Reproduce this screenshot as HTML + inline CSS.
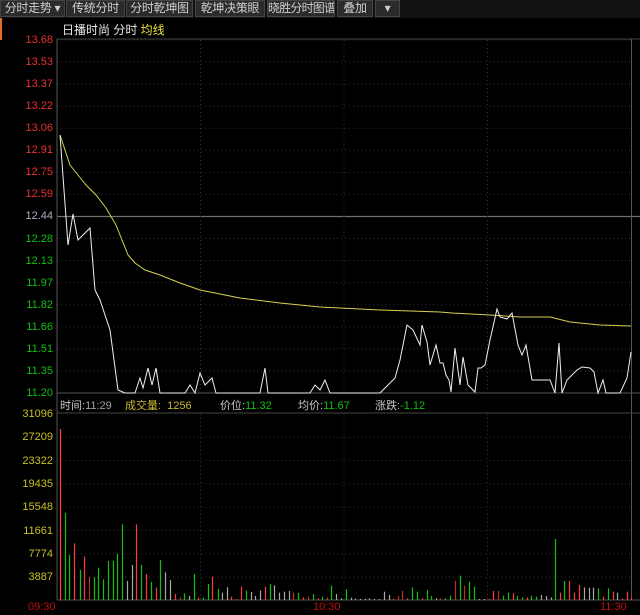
<!DOCTYPE html>
<html><head><meta charset="utf-8"><style>
*{margin:0;padding:0;box-sizing:border-box}
body{width:640px;height:615px;background:#000;overflow:hidden;position:relative;font-family:"Liberation Sans","Noto Sans CJK SC",sans-serif;font-size:12px}
.tb{position:absolute;top:0;left:0;width:640px;height:18px;background:#111}
.b{position:absolute;top:0;height:17px;background:#2b2b2b;border:1px solid #444;color:#cfcfcf;font-size:12px;line-height:15px;text-align:center;white-space:nowrap;overflow:hidden;letter-spacing:-0.3px}
.t{position:absolute;white-space:nowrap;font-size:11px;line-height:12px}
</style></head><body>
<div class="tb">
<div class="b" style="left:0;width:65px">分时走势 ▾</div>
<div class="b" style="left:66px;width:59px">传统分时</div>
<div class="b" style="left:126px;width:67px">分时乾坤图</div>
<div class="b" style="left:195px;width:70px">乾坤决策眼</div>
<div class="b" style="left:267px;width:68px;letter-spacing:-0.8px">晓胜分时图谱</div>
<div class="b" style="left:337px;width:36px">叠加</div>
<div class="b" style="left:375px;width:25px">▾</div>
</div>
<div style="position:absolute;left:0;top:18px;width:2px;height:22px;background:#e07020"></div>
<div class="t" style="left:62px;top:24px;font-size:12px;color:#e8e8e8">日播时尚 分时 <span style="color:#e8e040">均线</span></div>
<svg id="s" width="640" height="615" style="position:absolute;left:0;top:0"></svg>
<div id="labels"></div>
<div class="t" style="left:60px;top:400px;color:#c8c8c8">时间:<span style="color:#a0a0a0">11:29</span></div>
<div class="t" style="left:125px;top:400px;color:#c8b830">成交量: &nbsp;1256</div>
<div class="t" style="left:220px;top:400px;color:#c8c8c8">价位:<span style="color:#10c010">11.32</span></div>
<div class="t" style="left:298px;top:400px;color:#c8c8c8">均价:<span style="color:#10c010">11.67</span></div>
<div class="t" style="left:375px;top:400px;color:#c8c8c8">涨跌:<span style="color:#10c010">-1.12</span></div>
<div class="t" style="left:28px;top:601px;color:#c01010">09:30</div>
<div class="t" style="left:313px;top:601px;color:#c01010">10:30</div>
<div class="t" style="left:600px;top:601px;color:#c01010">11:30</div>
<script>
var s=document.getElementById('s'),h='';
var pl=["13.68","13.53","13.37","13.22","13.06","12.91","12.75","12.59","12.44","12.28","12.13","11.97","11.82","11.66","11.51","11.35","11.20"];
var lab='';
for(var i=0;i<17;i++){var y=40+i*22.06;
 if(i==8)h+='<line x1="57" y1="'+y+'" x2="640" y2="'+y+'" stroke="#707070" stroke-width="1.2"/>';
 else if(i==16)h+='<line x1="57" y1="'+y+'" x2="640" y2="'+y+'" stroke="#555"/>';
 else h+='<line x1="57" y1="'+y+'" x2="631" y2="'+y+'" stroke="#333" stroke-dasharray="1,3"/>';
 var c=i<8?'#e83030':(i==8?'#a8b4c8':'#10c010');
 lab+='<div class="t" style="right:587px;top:'+(y-6)+'px;color:'+c+'">'+pl[i]+'</div>';}
h+='<line x1="57" y1="39" x2="640" y2="39" stroke="#444"/>';
for(var k=1;k<4;k++){var x=57+k*143.5;h+='<line x1="'+x+'" y1="40" x2="'+x+'" y2="393" stroke="#333" stroke-dasharray="1,3"/><line x1="'+x+'" y1="414" x2="'+x+'" y2="600" stroke="#333" stroke-dasharray="1,3"/>';}
h+='<line x1="57" y1="39" x2="57" y2="600" stroke="#555"/><line x1="631.5" y1="39" x2="631.5" y2="600" stroke="#555"/>';
h+='<line x1="57" y1="413" x2="640" y2="413" stroke="#444"/><line x1="57" y1="600" x2="640" y2="600" stroke="#555"/>';
var vl=["31096","27209","23322","19435","15548","11661","7774","3887"];
for(var i=0;i<8;i++){var y=414+i*23.3;
 if(i>0)h+='<line x1="57" y1="'+y+'" x2="631" y2="'+y+'" stroke="#333" stroke-dasharray="1,3"/>';
 lab+='<div class="t" style="right:587px;top:'+(y-6)+'px;color:#c8c020">'+vl[i]+'</div>';}
document.getElementById('labels').innerHTML=lab;
var w="60,135 68,245 73,214 78,240 90,228 95,290 100,300 110,330 118,390 125,393 135,393 140,378 143,388 148,368 152,385 156,368 160,393 185,393 190,385 195,393 200,373 205,385 212,378 216,393 260,393 265,368 268,393 310,393 315,385 320,390 325,380 330,393 380,393 395,378 400,360 407,325 413,330 420,345 422,325 427,342 430,365 436,345 440,363 443,363 446,375 449,380 451,392 455,348 460,385 463,357 468,385 475,392 478,368 481,368 485,365 490,340 497,309 500,317 507,319 512,313 518,345 522,355 526,345 532,380 550,380 555,393 559,343 562,393 567,380 577,370 582,367 590,368 594,372 598,393 603,380 606,393 620,393 627,378 631,352";
var yl="60,135 70,165 78,175 86,185 96,195 106,208 116,225 122,240 128,255 135,263 145,270 160,275 180,283 200,290 240,298 280,303 320,307 380,310 440,312 452,313 490,315 520,317 550,317 570,322 600,325 631,326";
h+='<polyline points="'+yl+'" fill="none" stroke="#d8d050" stroke-width="1"/>';
h+='<polyline points="'+w+'" fill="none" stroke="#f0f0f0" stroke-width="1"/>';
var v="148,-275,r 160,-15,g 170,105,g 182,70,r 195,150,g 207,110,r 218,170,d 230,172,g 241,143,g 253,178,g 264,123,g 276,123,g 287,102,g 298,13,g 312,183,a 323,135,a 334,13,r 345,135,g 358,162,r 369,186,g 381,203,r 392,120,g 404,157,a 416,180,a 428,222,r 440,232,d 451,220,g 462,228,a 475,162,g 486,233,r 497,233,g 509,192,g 520,170,r 534,207,g 545,218,a 556,202,a 567,230,r 578,237,d 591,200,r 603,212,g 614,216,a 625,228,a 638,212,a 650,200,r 661,192,g 672,196,a 684,218,a 696,215,a 707,213,a 718,218,d 730,218,g 743,232,r 755,230,d 766,222,g 778,235,r 789,230,g 801,233,r 812,197,g 824,222,a 835,235,a 847,208,g 859,233,a 870,236,a 882,237,a 894,236,a 905,235,a 917,237,a 929,237,a 940,215,a 952,225,a 963,236,r 975,228,d 986,213,d 998,235,r 1010,202,g 1022,215,g 1033,235,r 1045,210,g 1056,228,g 1068,235,a 1079,235,d 1091,235,g 1103,227,g 1114,183,d 1126,167,g 1138,197,d 1150,185,g 1161,200,g 1173,237,a 1185,237,a 1197,237,r 1209,213,r 1220,213,d 1232,227,g 1244,218,g 1256,220,r 1267,228,g 1279,232,g 1290,232,r 1302,227,g 1313,230,g 1325,225,a 1337,228,a 1349,232,a 1360,57,g 1372,218,r 1383,183,g 1395,183,r 1407,218,r 1419,195,r 1430,202,a 1442,203,a 1454,203,a 1466,205,g 1477,230,r 1489,205,g 1501,215,r 1512,218,a 1524,236,r 1536,215,r 1547,233,r";
var cm={r:'#ff3a3a',d:'#b83030',g:'#10c010',a:'#a8a8a8'};
v.split(' ').forEach(function(p){var q=p.split(',');var x=Math.round(q[0]/2.45)+0.5;var t=520+q[1]/3;
 if(q[1]==-275)t=429;if(q[1]==-15)t=513;
 h+='<line x1="'+x+'" y1="'+t+'" x2="'+x+'" y2="600" stroke="'+cm[q[2]]+'" stroke-width="1.2"/>';});
s.innerHTML=h;
</script>
</body></html>
